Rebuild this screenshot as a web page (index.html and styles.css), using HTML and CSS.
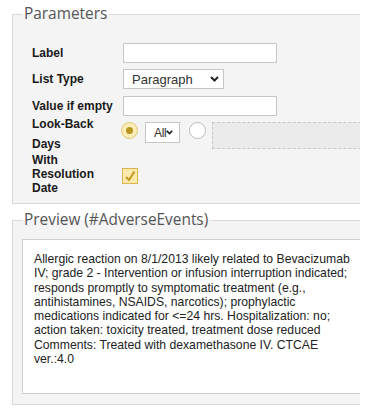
FILE: index.html
```html
<!DOCTYPE html>
<html>
<head>
<meta charset="utf-8">
<link rel="stylesheet" href="styles.css">
</head>
<body>
<div class="page">
  <fieldset class="box params">
    <legend class="legend">Parameters</legend>
    <div class="rows">
      <div class="row r1">
        <span class="lbl">Label</span>
        <span class="input wide"></span>
      </div>
      <div class="row r2">
        <span class="lbl">List Type</span>
        <span class="select sel-para">Paragraph
          <svg class="chev" width="9" height="6" viewBox="0 0 9 6"><path d="M1 1 L4.5 4.5 L8 1" fill="none" stroke="#222" stroke-width="2"/></svg>
        </span>
      </div>
      <div class="row r3">
        <span class="lbl">Value if empty</span>
        <span class="input wide"></span>
      </div>
      <div class="row r4">
        <span class="lbl lbl-tall">Look-Back<br>Days</span>
        <span class="radio on"><span class="dot"></span></span>
        <span class="select sel-all"><span class="all-txt">All</span>
          <svg class="chev" width="7" height="5" viewBox="0 0 7 5"><path d="M0.8 0.8 L3.5 3.6 L6.2 0.8" fill="none" stroke="#222" stroke-width="1.7"/></svg>
        </span>
        <span class="radio"></span>
        <span class="dashed"></span>
      </div>
      <div class="row r5">
        <span class="lbl lbl-3">With<br>Resolution<br>Date</span>
        <span class="check">
          <svg width="14" height="14" viewBox="0 0 14 14"><path d="M3 8 L6 11 L11.5 2.5" fill="none" stroke="#c2981c" stroke-width="2"/></svg>
        </span>
      </div>
    </div>
  </fieldset>
  <fieldset class="box preview">
    <legend class="legend">Preview (#AdverseEvents)</legend>
    <div class="textarea">Allergic reaction on 8/1/2013 likely related to Bevacizumab<br>IV; grade 2 - Intervention or infusion interruption indicated;<br>responds promptly to symptomatic treatment (e.g.,<br>antihistamines, NSAIDS, narcotics); prophylactic<br>medications indicated for &lt;=24 hrs. Hospitalization: no;<br>action taken: toxicity treated, treatment dose reduced<br>Comments: Treated with dexamethasone IV. CTCAE<br>ver.:4.0</div>
  </fieldset>
</div>
</body>
</html>
```
FILE: styles.css
```css
html, body {
  margin: 0;
  padding: 0;
  background: #fff;
}
.page {
  width: 360px;
  overflow: hidden;
  padding-left: 12px;
  box-sizing: border-box;
  font-family: Arial, "Liberation Sans", sans-serif;
  color: #222;
}
.box {
  width: 400px;
  box-sizing: border-box;
  margin: 0;
  border: 1px solid #d9d9d9;
  background: #f4f4f4;
  padding: 0 0 8px 9px;
  min-width: 0;
}
.params {
  margin-top: 4px;
}
.preview {
  margin-top: 6px;
  padding-bottom: 10px;
}
.legend {
  font-family: "Open Sans", sans-serif;
  font-size: 15.4px;
  line-height: 20px;
  color: #555;
  padding: 0 2px;
  margin: 0;
}
.rows {
  padding-left: 10px;
  display: flex;
  flex-direction: column;
}
.row {
  display: flex;
  align-items: center;
}
.lbl {
  width: 91px;
  flex: none;
  font-weight: bold;
  font-size: 12px;
  line-height: 14px;
  color: #1a1a1a;
}
.r1 { height: 20px; margin-top: 19px; }
.r2 { height: 20px; margin-top: 6px; }
.r3 { height: 20px; margin-top: 7px; }
.r4 { height: 40px; margin-top: -2px; align-items: flex-start; }
.r5 { height: 42px; margin-top: -1px; align-items: flex-start; }
.lbl-tall { line-height: 20px; }
.input {
  display: block;
  height: 20px;
  box-sizing: border-box;
  border: 1px solid #c6c6c6;
  background: #fff;
}
.wide { width: 154px; }
.select {
  display: flex;
  align-items: center;
  justify-content: space-between;
  box-sizing: border-box;
  border: 1px solid #c6c6c6;
  background: #fff;
  font-size: 13px;
  color: #333;
}
.sel-para {
  width: 101px;
  height: 20px;
  padding: 0 4px 0 8px;
}
.sel-all {
  width: 41px;
  height: 21px;
  padding: 0 6px 0 8px;
  margin-top: 8px;
  margin-left: 7px;
  font-size: 12px;
}
.all-txt {
  letter-spacing: -0.3px;
}
.radio {
  width: 17px;
  height: 17px;
  box-sizing: border-box;
  border-radius: 50%;
  border: 1px solid #bdbdbd;
  background: #fff;
  margin-top: 8px;
  display: flex;
  align-items: center;
  justify-content: center;
  flex: none;
}
.radio.on {
  border-color: #e0c779;
  background: #fcecb8;
  margin-left: -2px;
}
.radio .dot {
  width: 7px;
  height: 7px;
  border-radius: 50%;
  background: #b9961f;
}
.sel-all + .radio {
  margin-left: 9px;
}
.dashed {
  flex: none;
  width: 200px;
  height: 27px;
  box-sizing: border-box;
  margin-top: 8px;
  margin-left: 6px;
  border: 1px dashed #c8c8c8;
  background: #ebebeb;
}
.check {
  width: 16px;
  height: 16px;
  box-sizing: border-box;
  margin-top: 15px;
  margin-left: -1px;
  border: 1px solid #d9b552;
  background: #fde9a9;
  display: flex;
  align-items: center;
  justify-content: center;
}
.textarea {
  width: 370px;
  height: 155px;
  box-sizing: border-box;
  margin-top: 9px;
  border: 1px solid #cfcfcf;
  background: #fff;
  padding: 12px 0 0 11px;
  font-size: 12.2px;
  line-height: 14.3px;
  white-space: nowrap;
  color: #222;
}
```
